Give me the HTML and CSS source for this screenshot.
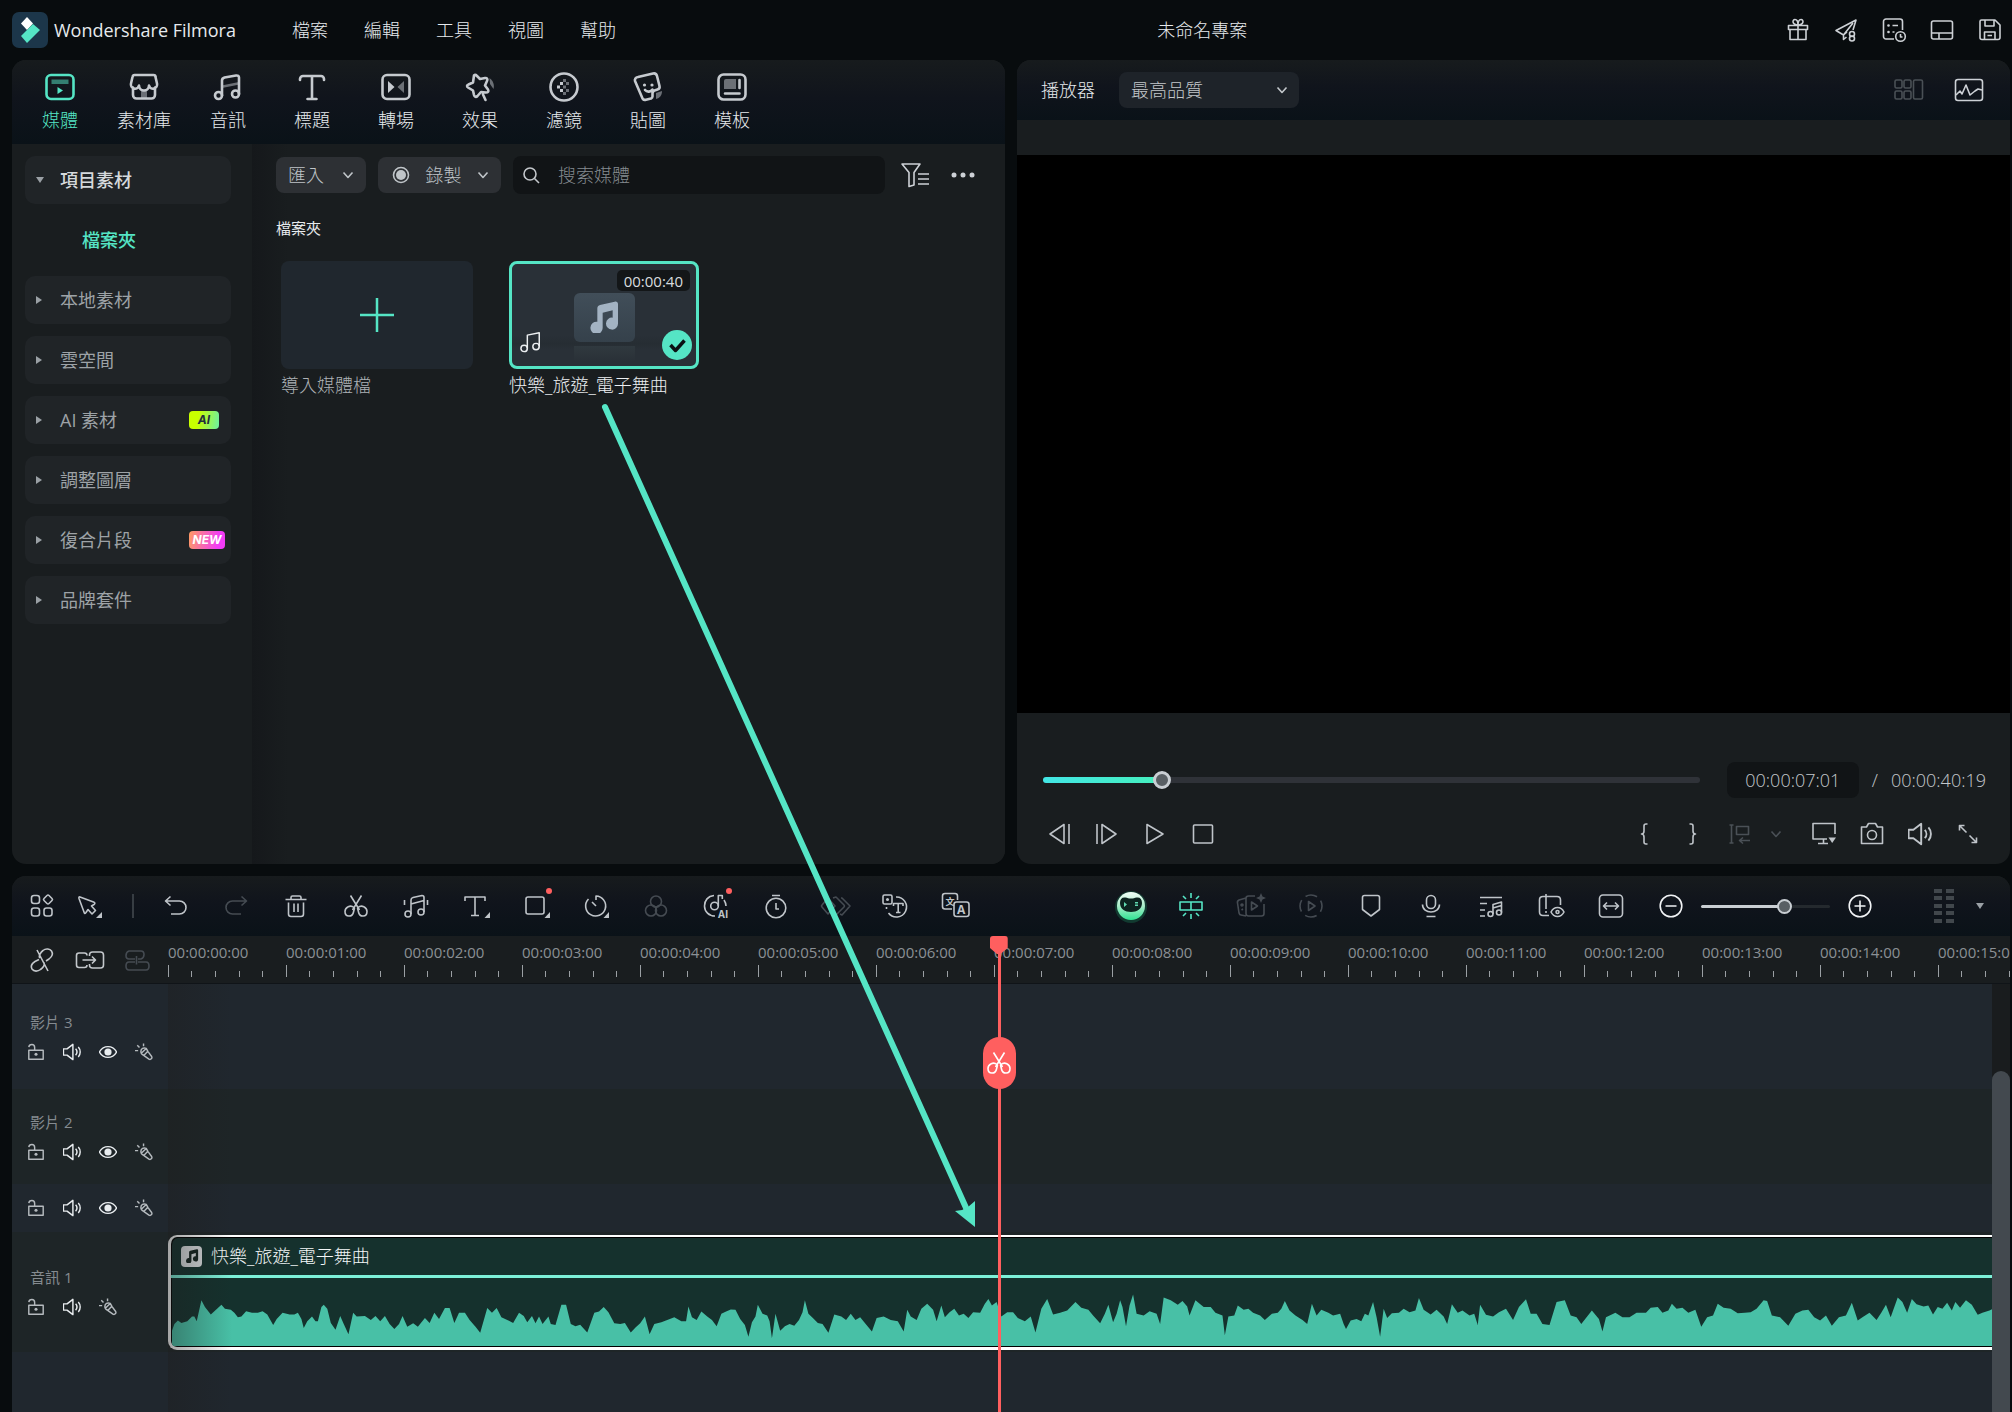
FILE: index.html
```html
<!DOCTYPE html>
<html lang="zh-Hant">
<head>
  <meta charset="UTF-8">
  <meta name="viewport" content="width=device-width, initial-scale=1">
  <title>Wondershare Filmora</title>
  <link rel="stylesheet" href="styles.css">
</head>
<body>

  <!-- Iconos compartidos -->
  <svg class="sprite" aria-hidden="true">
    <symbol id="i-chevron" viewBox="0 0 12 12"><path d="M1.500 3.500 6 8.500l4.500-5"/></symbol>
    <symbol id="i-scissors" viewBox="0 0 24 24"><path d="M6.500 1.500 15.500 16M17.500 1.500 8.500 16"/><path d="M10 13.500C6.500 10.500 1 13 1 17.500c0 6 7.500 6 8.500.500l1-4M14 13.500c3.500-3 9-.500 9 4 0 6-7.500 6-8.500.500l-1-4"/></symbol>
    <symbol id="i-lock" viewBox="0 0 20 20"><path d="M2 8h16v10H2zM2 4.500C2.500 1 8.500.500 8.500 5v3"/><circle class="solid" cx="10" cy="12.500" r="1.700"/></symbol>
    <symbol id="i-speaker" viewBox="0 0 20 20"><path d="M.500 6.500H4.500L11 1.500v17L4.500 13.500H.500zM14 6.500c1.800 2 1.800 5 0 7M17 4.500c2.800 3 2.800 8 0 11"/></symbol>
    <symbol id="i-eye" viewBox="0 0 20 20"><path d="M.500 10C5 2 15 2 19.500 10 15 18 5 18 .500 10z"/><circle class="solid" cx="10" cy="10" r="4"/></symbol>
    <symbol id="i-fx" viewBox="0 0 20 20"><path d="M6.500 9.500c0-3 3-5 6-3.500l2 3.500 4 5.500c1 2-1 4-3 3l-5.500-4c-2-1-3.500-2.500-3.500-4.500zM7 11.500 12.500 6M10 13.500 14.500 9M0 8.500h3.500M2.500 2.500l2.500 2.500M9.500.500v3"/></symbol>
    <symbol id="i-notes" viewBox="0 0 24 24"><circle cx="4.500" cy="19" r="3.500"/><circle cx="17.500" cy="17" r="3.500"/><path d="M8 19V4.500L21 2v15"/></symbol>
    <symbol id="i-notes-solid" viewBox="0 0 24 24"><path class="solid" d="M7 5.500C7 4 8 3.300 9 3l11-2.500c1.500-.300 2.500.500 2.500 2V17a4.500 4.500 0 1 1-4-4.500V7l-7.500 1.800V20A4.600 4.600 0 1 1 7 15.600z"/></symbol>
  </svg>

  <header class="titlebar">
    <svg class="logo" viewBox="0 0 36 36" aria-hidden="true">
      <rect width="36" height="36" rx="7" fill="#1c364a"/>
      <path d="M15 5l6 6.500-6 6.500-6-6.500z" fill="#fff"/>
      <path d="M21 12l7 6-13 13-6-7z" fill="#55e5c5"/>
    </svg>
    <span class="app-name">Wondershare Filmora</span>
    <nav class="menu">
      <button>檔案</button>
      <button>編輯</button>
      <button>工具</button>
      <button>視圖</button>
      <button>幫助</button>
    </nav>
    <span class="project-name">未命名專案</span>
    <div class="title-actions">
      <button aria-label="禮物"><svg class="icon" viewBox="0 0 24 24"><path d="M2.500 7.500h19v4h-19zM4 11.500h16v10H4zM12 7.500v14"/><path d="M12 7C6 7 6 1.500 9 1.500c2 0 3 2.500 3 5.500 0-3 1-5.500 3-5.500 3 0 3 5.500-3 5.500z"/></svg></button>
      <button aria-label="分享"><svg class="icon" viewBox="0 0 24 24"><path d="M13 14 9.500 17v4.500l3-2.500M9.500 17 2 12.500 22 2l-3 10M9.500 17 19 5"/><circle cx="18" cy="16" r="2.500"/><circle cx="18" cy="20.500" r="2.500"/></svg></button>
      <button aria-label="任務"><svg class="icon" viewBox="0 0 24 24"><path d="M12 21H4a2.500 2.500 0 0 1-2.500-2.500v-15A2.500 2.500 0 0 1 4 1h14a2.500 2.500 0 0 1 2.500 2.500V12M10.500 7.500H16M10.500 14h2"/><circle class="solid" cx="6.500" cy="7.500" r="1.300"/><circle class="solid" cx="6.500" cy="14" r="1.300"/><circle cx="18.500" cy="18.500" r="4.800"/><path d="M18.500 16v3h2"/></svg></button>
      <button aria-label="版面"><svg class="icon" viewBox="0 0 24 24"><rect x="1.500" y="3" width="21" height="18" rx="2"/><path d="M1.500 15h21M9 15v6"/></svg></button>
      <button aria-label="儲存"><svg class="icon" viewBox="0 0 24 24"><path d="M3.500 2H17l5 5v12.500a2 2 0 0 1-2 2H4a2 2 0 0 1-2-2v-16A1.500 1.500 0 0 1 3.500 2zM7 2v6h9V2M6.500 21.500V14H17v7.500M9.500 17.500H14"/></svg></button>
    </div>
  </header>

  <main class="workspace">

    <!-- Panel de medios -->
    <section class="panel media">
      <nav class="tabs">
        <button class="tab active">
          <svg class="tab-icon" viewBox="0 0 30 30"><rect x="1.500" y="3" width="27" height="24" rx="4.500"/><path class="solid dim" d="M6.500 7.500h17V12h-17z"/><path class="solid" d="M12.500 15l5.500 3.500-5.500 3.500z"/></svg>
          媒體
        </button>
        <button class="tab">
          <svg class="tab-icon" viewBox="0 0 30 30"><path d="M4 15.500V23a3.500 3.500 0 0 0 3.500 3.500h15A3.500 3.500 0 0 0 26 23v-7.500M5.500 3h19c1 0 2 .500 2 2l1.500 6.500a4 4 0 0 1-8 2 5 5 0 0 1-10 0 4 4 0 0 1-8-2L3.500 5c.300-1.500 1-2 2-2z"/><path class="solid dim" d="M12 26v-5a3 3 0 0 1 6 0v5z"/></svg>
          素材庫
        </button>
        <button class="tab">
          <svg class="tab-icon" viewBox="0 0 30 30"><circle cx="5.500" cy="23.500" r="3.500"/><circle cx="22.500" cy="22" r="3.500"/><path d="M9 23.500V8.500c0-2 1-2.500 2.500-3L23 3.500c2-.300 3 .500 3 2V22"/><path class="soft" d="M10 14.500l15-3"/></svg>
          音訊
        </button>
        <button class="tab">
          <svg class="tab-icon" viewBox="0 0 30 30"><path d="M3 8V7a3 3 0 0 1 3-3h18a3 3 0 0 1 3 3v1M15 4v22.500M10.500 27h9"/></svg>
          標題
        </button>
        <button class="tab">
          <svg class="tab-icon" viewBox="0 0 30 30"><rect x="1.500" y="3" width="27" height="24" rx="4.500"/><path class="solid" d="M7 9l6.500 6L7 21z"/><path class="solid dim" d="M23 9l-6.500 6 6.500 6z"/></svg>
          轉場
        </button>
        <button class="tab">
          <svg class="tab-icon" viewBox="0 0 30 30"><path d="M9 3.500c1-1 2-.500 3 .500l3 3 5-1c2-.300 3 1 2 3l-2 4.500 3 4c1 2 0 3-2 3l-5-.500-3.500 4c-1.500 1.500-3 1-3.500-1L8 18.500l-5-3c-1.500-1-1.200-2.500.500-3l4.500-2zM18 22.500 20.500 28"/><path class="solid dim" d="M24.500 6c4 3 5 7 4 11l-3.500-5z"/></svg>
          效果
        </button>
        <button class="tab">
          <svg class="tab-icon" viewBox="0 0 30 30"><circle cx="15" cy="15" r="13.500"/><path class="solid" d="M8 13.500h3v3H8zM11 10h3v3h-3zM11 17h3v3h-3z"/><path class="solid dim" d="M14 7h3v3h-3zM14 13.500h3v3h-3zM14 20h3v3h-3zM17 10h3v3h-3zM17 17h3v3h-3z"/></svg>
          濾鏡
        </button>
        <button class="tab">
          <svg class="tab-icon" viewBox="0 0 30 30"><path d="M5 5 20 1.500c2.500-.500 3.500.500 4 2.500l2.500 10c.500 2-.500 3-2 3.500l-3 1c-1.500.500-2 1.500-2 3v3c0 1-.500 1.500-1.500 2l-5 1.200c-2 .500-3.500-.500-4-2.500L2 9c-.500-2 .500-3.500 3-4zM12 18c2 2.500 6 2 7.500-.500"/><circle class="solid" cx="11.500" cy="13" r="1.600"/><circle class="solid" cx="19" cy="13" r="1.600"/><path class="solid dim" d="M23 21l6-2c0 4-2 7-6 8z"/></svg>
          貼圖
        </button>
        <button class="tab">
          <svg class="tab-icon" viewBox="0 0 30 30"><rect x="1.500" y="2.500" width="27" height="25" rx="5"/><path class="solid dim" d="M7 9a2 2 0 0 1 2-2h10v10H7z"/><path d="M22.500 8v8M8 21.500h14.500"/></svg>
          模板
        </button>
      </nav>

      <div class="media-body">
        <aside class="sidebar">
          <button class="group open"><span class="caret"></span>項目素材</button>
          <a class="subitem" href="#folder">檔案夾</a>
          <button class="group"><span class="caret"></span>本地素材</button>
          <button class="group"><span class="caret"></span>雲空間</button>
          <button class="group"><span class="caret"></span>AI 素材<span class="tag tag-ai">AI</span></button>
          <button class="group"><span class="caret"></span>調整圖層</button>
          <button class="group"><span class="caret"></span>復合片段<span class="tag tag-new">NEW</span></button>
          <button class="group"><span class="caret"></span>品牌套件</button>
        </aside>

        <div class="browser" id="folder">
          <div class="browser-bar">
            <button class="pill">匯入 <svg class="chevron"><use href="#i-chevron"/></svg></button>
            <button class="pill pill-wide"><svg class="rec" viewBox="0 0 18 18"><circle cx="9" cy="9" r="7.500"/><circle class="solid" cx="9" cy="9" r="5"/></svg> 錄製 <svg class="chevron"><use href="#i-chevron"/></svg></button>
            <label class="search">
              <svg class="search-icon" viewBox="0 0 18 18"><circle cx="8" cy="8" r="6"/><path d="M12.500 12.500 17 17"/></svg>
              <input type="search" placeholder="搜索媒體" aria-label="搜索媒體">
            </label>
            <button class="bar-button" aria-label="篩選"><svg class="filter-icon" viewBox="0 0 30 26"><path d="M2 2h18l-6 8.500V23l-5 1.500v-14zM18 12h11M18 17h11M18 22h11"/></svg></button>
            <button class="bar-button" aria-label="更多"><svg class="icon" viewBox="0 0 24 24"><circle class="solid" cx="3" cy="12" r="2.500"/><circle class="solid" cx="12" cy="12" r="2.500"/><circle class="solid" cx="21" cy="12" r="2.500"/></svg></button>
          </div>

          <h2 class="folder-title">檔案夾</h2>

          <div class="items">
            <figure class="item">
              <button class="thumb thumb-add" aria-label="導入媒體檔"><svg viewBox="0 0 34 34"><path d="M17 0v34M0 17h34"/></svg></button>
              <figcaption>導入媒體檔</figcaption>
            </figure>
            <figure class="item selected">
              <div class="thumb thumb-audio">
                <span class="cover"><svg><use href="#i-notes-solid"/></svg></span>
                <span class="floor"></span>
                <span class="length">00:00:40</span>
                <svg class="kind"><use href="#i-notes"/></svg>
                <svg class="check" viewBox="0 0 30 30"><circle cx="15" cy="15" r="15"/><path d="M8.500 15l5 5.500 9-10"/></svg>
              </div>
              <figcaption>快樂_旅遊_電子舞曲</figcaption>
            </figure>
          </div>
        </div>
      </div>
    </section>

    <!-- Reproductor -->
    <section class="panel player">
      <div class="player-head">
        <label for="quality">播放器</label>
        <div class="select-box">
          <select id="quality">
            <option>最高品質</option>
          </select>
          <svg class="chevron"><use href="#i-chevron"/></svg>
        </div>
        <div class="player-views">
          <button class="disabled" aria-label="多鏡頭"><svg class="wide-icon" viewBox="0 0 30 24"><rect x="1" y="2" width="7" height="8" rx="1.500"/><rect x="10" y="2" width="7" height="8" rx="1.500"/><rect x="1" y="13" width="7" height="8" rx="1.500"/><rect x="10" y="13" width="7" height="8" rx="1.500"/><rect x="19.500" y="2" width="9" height="19" rx="1.500"/></svg></button>
          <button aria-label="示波器"><svg class="wide-icon" viewBox="0 0 30 24"><rect x="1.500" y="1.500" width="27" height="21" rx="2.500"/><path d="M2 17l4-4 2 3 4-9 4 10 5-4 3-2 4 1"/></svg></button>
        </div>
      </div>
      <div class="stage"></div>
      <div class="controls">
        <div class="seek-row">
          <input class="seek" type="range" min="0" max="100" step="0.1" value="17.2" aria-label="播放進度">
          <span class="time current">00:00:07:01</span>
          <span class="slash">/</span>
          <span class="time">00:00:40:19</span>
        </div>
        <div class="button-row">
          <button aria-label="上一幀"><svg class="icon" viewBox="0 0 24 24"><path d="M17 2.500v19L3 12zM22 2v20"/></svg></button>
          <button aria-label="下一幀"><svg class="icon" viewBox="0 0 24 24"><path d="M7 2.500v19L21 12zM2 2v20"/></svg></button>
          <button aria-label="播放"><svg class="icon" viewBox="0 0 24 24"><path d="M4 2.500v19L20 12z"/></svg></button>
          <button aria-label="停止"><svg class="icon" viewBox="0 0 24 24"><rect x="2.500" y="3" width="19" height="18" rx="1"/></svg></button>
          <span class="spacer"></span>
          <button aria-label="標記入點"><svg class="icon" viewBox="0 0 24 24"><path d="M15.500 2H14q-2 0-2 2v5q0 3-2.500 3 2.500 0 2.500 3v5q0 2 2 2h1.500"/></svg></button>
          <button aria-label="標記出點"><svg class="icon" viewBox="0 0 24 24"><path d="M9.500 2H11q2 0 2 2v5q0 3 2.500 3-2.500 0-2.500 3v5q0 2-2 2H9.500"/></svg></button>
          <button class="disabled small after-gap" aria-label="插入"><svg class="icon" viewBox="0 0 24 24"><path d="M1.500 3h4M3.500 3v18M1.500 21h4M8.500 4.500h12v8h-12zM22 18.500H12M15 15.500l-3.500 3 3.500 3"/></svg></button>
          <button class="disabled" aria-label="插入選項"><svg class="chevron"><use href="#i-chevron"/></svg></button>
          <button aria-label="顯示器"><svg class="icon" viewBox="0 0 24 24"><path d="M15 17H1V1.500h22V12M11.500 17v4.500M6 21.500h10"/><path class="solid" d="M16.500 15.500h7.500L20.200 21z"/></svg></button>
          <button aria-label="快照"><svg class="icon" viewBox="0 0 24 24"><path d="M1.500 5h5L8.500 1.500h7l2 3.500h5v16.500h-21z"/><circle cx="12" cy="13" r="4.500"/></svg></button>
          <button aria-label="音量"><svg class="icon"><use href="#i-speaker"/></svg></button>
          <button aria-label="全螢幕"><svg class="icon" viewBox="0 0 24 24"><path d="M3.500 8.500v-5h5M3.500 3.500l7 7M20.500 15.500v5h-5M20.500 20.500l-7-7"/></svg></button>
        </div>
      </div>
    </section>
  </main>

  <!-- Línea de tiempo -->
  <section class="timeline">
    <div class="tools">
      <button class="tool narrow" aria-label="面板"><svg class="icon" viewBox="0 0 24 24"><rect x="1.500" y="1.500" width="8" height="8" rx="2.500"/><rect x="1.500" y="14" width="8" height="8" rx="2.500"/><rect x="14" y="14" width="8" height="8" rx="2.500"/><path d="M17 1.500q1-1 2 0l3 3q1 1 0 2l-3 3q-1 1-2 0l-3-3q-1-1 0-2z"/></svg></button>
      <button class="tool narrow" aria-label="選取"><svg class="icon" viewBox="0 0 24 24"><path d="M2 3 15.500 8q2.500 1 .500 2.500l-2.500 1.500 4 4.500-3.500 3.500-4-4.500-2 3q-1.500 2-2-.500L1 4.500Q.500 2.500 2 3z"/><path class="solid" d="M24 18v6h-6z"/></svg></button>
      <span class="divider"></span>
      <button class="tool" aria-label="復原"><svg class="icon" viewBox="0 0 24 24"><path d="M1.500 7h14a6.500 6.500 0 0 1 0 13H7M6.500 2.500l-5 4.500 5 4.500"/></svg></button>
      <button class="tool disabled" aria-label="重做"><svg class="icon" viewBox="0 0 24 24"><path d="M22.500 7h-14a6.500 6.500 0 0 0 0 13H17M17.500 2.500l5 4.500-5 4.500"/></svg></button>
      <button class="tool" aria-label="刪除"><svg class="icon" viewBox="0 0 24 24"><path d="M1.500 5.500h21M7 5V3.500Q7 2 8.500 2h7Q17 2 17 3.500V5M4.500 8.500V20q0 2.500 2.500 2.500h10q2.500 0 2.500-2.500V8.500M10 9.500V18M14 9.500V18"/></svg></button>
      <button class="tool" aria-label="分割"><svg class="icon"><use href="#i-scissors"/></svg></button>
      <button class="tool" aria-label="音訊編輯"><svg class="icon" viewBox="0 0 24 24"><circle cx="4" cy="20" r="3"/><circle cx="17" cy="18" r="3"/><path d="M7 20V6q0-2 2-2.500L18 1.500q2 0 2 2V18M7 10l13-3.500M.500 6v5M23.500 6v5"/></svg></button>
      <button class="tool" aria-label="文字"><svg class="icon" viewBox="0 0 24 24"><path d="M1 7V3h20v4M11 3v18.500M7 21.500h8"/><path class="solid" d="M26 18v6h-5.500z"/></svg></button>
      <button class="tool dot" aria-label="裁切"><svg class="icon" viewBox="0 0 24 24"><rect x="2" y="3" width="18" height="17" rx="2"/><path class="solid" d="M26 18v6h-5.500z"/></svg></button>
      <button class="tool" aria-label="速度"><svg class="icon" viewBox="0 0 24 24"><path d="M4.500 5a10 10 0 1 0 7.500-3v4M8 8l4 4"/><path class="solid" d="M25 18v6h-5.500z"/></svg></button>
      <button class="tool disabled" aria-label="顏色"><svg class="icon" viewBox="0 0 24 24"><circle cx="12" cy="7.500" r="5.500"/><circle cx="7" cy="16.500" r="5.500"/><circle cx="17" cy="16.500" r="5.500"/></svg></button>
      <button class="tool dot" aria-label="AI 音訊"><svg class="icon" viewBox="0 0 24 24"><path d="M10 1.500C4 2 .500 6.500.500 12S5 22 11 22"/><circle cx="10.500" cy="12" r="3.800"/><path d="M14.300 12V1.500h4V5M20 6q2 3 2 6"/><text class="glyph" x="14" y="24" font-size="10">AI</text></svg></button>
      <button class="tool" aria-label="時長"><svg class="icon" viewBox="0 0 24 24"><circle cx="12" cy="14" r="9.800"/><path d="M8 1.500h8M12 9v6h3"/></svg></button>
      <button class="tool disabled" aria-label="關鍵影格"><svg class="icon" viewBox="0 0 24 24"><path d="M4 4l7 8-7 8-6-7q-1-1 0-2zM9 4l3-1 8 8q1 1 0 2l-8 8-3-1M17 4h1l8 8-8 9-2-1"/></svg></button>
      <button class="tool" aria-label="文字轉語音"><svg class="icon" viewBox="0 0 24 24"><rect x="-1" y="1" width="9" height="9" rx="1.500"/><circle class="solid" cx="3.500" cy="5.500" r="1.500"/><path d="M12 3a10 10 0 1 1-7.500 16M2.500 13v2M9.500 12V9.500H19V12M14.200 9.500V18.500M12 18.500h4.500"/></svg></button>
      <button class="tool" aria-label="翻譯"><svg class="icon" viewBox="0 0 24 24"><path d="M8 15H1q-2.500 0-2.500-2.500V2Q-1.500-.500 1-.500h10q2.500 0 2.500 2.500v4"/><rect x="10" y="8" width="15" height="14.500" rx="2.500"/><text class="glyph" x="1.500" y="11" font-size="9">文</text><text class="glyph" x="13" y="20" font-size="12">A</text></svg></button>

      <span class="spacer"></span>

      <button class="tool" aria-label="AI 助手">
        <svg class="robot" viewBox="0 0 36 36">
          <defs>
            <linearGradient id="robot-skin" x1="0" y1="0" x2="0" y2="1"><stop offset="0" stop-color="#f2fff8"/><stop offset=".5" stop-color="#a9ecc9"/><stop offset="1" stop-color="#2fe292"/></linearGradient>
          </defs>
          <circle cx="18" cy="19" r="16" fill="#1fae74" opacity=".25"/>
          <circle cx="18" cy="18" r="14" fill="url(#robot-skin)"/>
          <path d="M7 15c0-4 2-6 5.500-5.500 2 .400 3 1 5.500 1s3.500-.600 5.500-1C27 9 29 11 29 15c0 6-5 9-11 9S7 21 7 15z" fill="#0c2420"/>
          <path d="M11 14l3 2.500-3 2.500zM22 14h3v1.500h-3zM22 16.500h3V18h-3z" fill="#5fd9b0"/>
        </svg>
      </button>
      <button class="tool accent" aria-label="自動吸附"><svg class="icon" viewBox="0 0 24 24"><path d="M1 8h22v8H1zM12 8v8M12-1v5M12 20v5M4 2l3 3M20 2l-3 3M4 22l3-3M20 22l-3-3"/></svg></button>
      <button class="tool disabled" aria-label="渲染"><svg class="icon" viewBox="0 0 24 24"><path d="M16 2H9.500Q7 2 7 4.500v15Q7 22 9.500 22h13q2.500 0 2.500-2.500V10M7 4 0 6q-2 1-1.500 3L0 19q.500 2 2 2l5 1M12.500 8v8l6-4z"/><path class="solid" d="M22-1l1.500 3.500L27 4l-3.500 1.500L22 9l-1.500-3.500L17 4l3.500-1.500z"/><circle cx="3" cy="11" r="1"/><path d="M2.500 16l1.500-1"/></svg></button>
      <button class="tool disabled" aria-label="預覽渲染"><svg class="icon" viewBox="0 0 24 24"><circle cx="12" cy="12" r="11" stroke-dasharray="12 5.280" stroke-dashoffset="6"/><path d="M9.500 7.500v9L16 12z"/></svg></button>
      <button class="tool" aria-label="標記"><svg class="icon" viewBox="0 0 24 24"><path d="M5.500 1.500h13Q20.500 1.500 20.500 3.500V15.500L12 22 3.500 15.500V3.500Q3.500 1.500 5.500 1.500z"/></svg></button>
      <button class="tool" aria-label="錄音"><svg class="icon" viewBox="0 0 24 24"><rect x="7.500" y="1.500" width="9" height="13" rx="4.500"/><path d="M3.500 10.500c0 10 17 10 17 0M7.500 22.500h9"/></svg></button>
      <button class="tool" aria-label="混音"><svg class="icon" viewBox="0 0 24 24"><path d="M1 3.500h22M1 9.500h7M1 16h5M1 22h5"/><circle cx="11.500" cy="20" r="2.500"/><circle cx="20" cy="18.500" r="2.500"/><path d="M14 20v-9.500L22.500 8v10.500M14 14l8.500-2.500"/></svg></button>
      <button class="tool" aria-label="預覽軌道"><svg class="icon" viewBox="0 0 24 24"><path d="M10 21.500H4Q.500 21.500.500 18V6Q.500 2.500 4 2.500h14q3.500 0 3.500 3.500v5M7 0v15M7 17v2"/><path d="M12 18c3-6 10-6 13 0-3 6-10 6-13 0z"/><circle cx="18.500" cy="18" r="1.500"/></svg></button>
      <button class="tool" aria-label="縮放至適合"><svg class="icon" viewBox="0 0 24 24"><rect x=".500" y="1" width="23" height="22" rx="3.500"/><path d="M4.500 12h15M8 8.500 4.500 12 8 15.500M16 8.500l3.500 3.500-3.500 3.500"/></svg></button>
      <button class="tool bright" aria-label="縮小"><svg class="icon" viewBox="0 0 24 24"><circle cx="12" cy="12" r="10.800"/><path d="M6.500 12h11"/></svg></button>
      <input class="zoom" type="range" min="0" max="100" value="67" aria-label="時間軸縮放">
      <button class="tool bright" aria-label="放大"><svg class="icon" viewBox="0 0 24 24"><circle cx="12" cy="12" r="10.800"/><path d="M6.500 12h11M12 6.500v11"/></svg></button>
      <svg class="meter" viewBox="0 0 20 36"><path d="M0 3h8M12 3h8M0 10h8M12 10h8M0 18h8M12 18h8M0 25h8M12 25h8M0 33h8M12 33h8"/></svg>
      <button class="menu-arrow" aria-label="軌道選項"><span class="caret"></span></button>
    </div>

    <div class="ruler-row">
      <div class="ruler-head">
        <button class="tool narrow" aria-label="連結"><svg class="icon" viewBox="0 0 24 24"><path d="M10 10C8 8 11 4 13 2.500c3-2.500 7-1.500 8.500.500 2 3 0 6-2.500 8l-3 2M9 11.500l-4 2c-3 2-4.500 5-3 7.500 2 3 6 2.500 8.500.500 2-1.500 4.500-4.500 3.500-7M7 2l11 21"/></svg></button>
        <button class="tool narrow" aria-label="自動波紋"><svg class="icon" viewBox="0 0 24 24"><path d="M9 17q0 2.500-2.500 2.500H1Q-1.500 19.500-1.500 17V7.500Q-1.500 5 1 5h5.500Q9 5 9 7.500M11.500 8V7q0-3 3-3h8q3 0 3 3v10q0 3-3 3h-8q-3 0-3-3v-1M4.500 12h13M14 8.500l3.500 3.500-3.500 3.500"/></svg></button>
        <button class="tool narrow disabled" aria-label="磁性"><svg class="icon" viewBox="0 0 24 24"><path d="M9 11H3Q0 11 0 7.500T3 3h12q3 0 3 3.500T15 11h-3M9 14H3q-3 0-3 4t3 4h17q3 0 3-4t-3-4h-8M10.500 8v8.500"/></svg></button>
      </div>
      <div class="ruler" id="ruler"></div>
    </div>

    <div class="tracks-area">
      <div class="tracks">
        <div class="track track-video tall">
          <div class="track-head">
            <span class="track-name">影片 3</span>
            <div class="track-buttons">
              <button aria-label="鎖定"><svg><use href="#i-lock"/></svg></button>
              <button class="on" aria-label="靜音"><svg><use href="#i-speaker"/></svg></button>
              <button class="on" aria-label="顯示"><svg><use href="#i-eye"/></svg></button>
              <button aria-label="特效"><svg><use href="#i-fx"/></svg></button>
            </div>
          </div>
          <div class="lane"></div>
        </div>
        <div class="track track-alt">
          <div class="track-head">
            <span class="track-name">影片 2</span>
            <div class="track-buttons">
              <button aria-label="鎖定"><svg><use href="#i-lock"/></svg></button>
              <button class="on" aria-label="靜音"><svg><use href="#i-speaker"/></svg></button>
              <button class="on" aria-label="顯示"><svg><use href="#i-eye"/></svg></button>
              <button aria-label="特效"><svg><use href="#i-fx"/></svg></button>
            </div>
          </div>
          <div class="lane"></div>
        </div>
        <div class="track track-video compact">
          <div class="track-head">
            <div class="track-buttons">
              <button aria-label="鎖定"><svg><use href="#i-lock"/></svg></button>
              <button class="on" aria-label="靜音"><svg><use href="#i-speaker"/></svg></button>
              <button class="on" aria-label="顯示"><svg><use href="#i-eye"/></svg></button>
              <button aria-label="特效"><svg><use href="#i-fx"/></svg></button>
            </div>
          </div>
          <div class="lane"></div>
        </div>
        <div class="track track-alt audio">
          <div class="track-head">
            <span class="track-name">音訊 1</span>
            <div class="track-buttons">
              <button aria-label="鎖定"><svg><use href="#i-lock"/></svg></button>
              <button class="on" aria-label="靜音"><svg><use href="#i-speaker"/></svg></button>
              <button aria-label="特效"><svg><use href="#i-fx"/></svg></button>
            </div>
          </div>
          <div class="lane">
            <div class="clip">
              <div class="clip-name"><span class="clip-icon"><svg><use href="#i-notes-solid"/></svg></span>快樂_旅遊_電子舞曲</div>
              <svg class="wave" viewBox="3 0 1548 195" preserveAspectRatio="none">
                <path d="M3 195V150L5 130 8 120 11 127 16 122 20 108 22 108 24 122 28 60 31 80 36 102 45 73 48 85 53 88 56 97 59 110 62 108 66 92 71 97 76 97 80 92 84 102 89 133 92 115 97 97 103 102 107 102 110 97 113 115 115 142 118 122 122 108 125 122 127 122 130 80 132 73 135 85 138 127 142 147 146 106 149 130 153 160 157 97 160 108 167 106 172 118 176 106 180 122 184 106 188 130 192 145 196 130 199 106 203 138 208 128 212 138 218 112 222 127 226 97 230 115 235 83 239 83 243 127 247 97 252 97 256 118 261 138 265 156 271 83 275 97 279 83 283 110 288 118 293 127 298 97 302 106 305 125 309 106 312 128 315 108 318 130 323 108 325 130 329 133 334 73 338 73 342 130 346 137 350 132 356 155 362 97 366 93 370 80 374 95 379 128 384 130 388 127 393 155 397 140 401 128 405 108 409 160 413 130 419 125 424 118 430 110 436 122 440 122 442 78 445 110 449 118 453 93 458 108 462 118 466 137 470 100 474 93 478 87 482 88 486 115 490 133 493 168 496 125 499 108 501 73 505 100 509 105 511 122 513 172 516 100 520 150 524 137 528 130 532 135 536 118 539 95 541 60 544 100 548 113 552 127 556 130 561 156 566 102 572 108 576 118 580 100 584 118 588 110 592 127 598 152 602 112 608 108 614 118 620 122 625 152 628 88 631 108 636 118 640 85 645 70 650 88 653 122 657 75 660 110 664 95 668 85 672 105 676 100 680 112 684 95 690 97 694 70 697 56 700 75 704 65 708 108 713 95 718 95 722 112 728 122 733 108 737 155 742 85 747 56 752 102 758 97 764 90 771 65 776 82 782 88 786 105 792 128 796 100 799 73 803 125 806 100 809 60 811 80 814 137 817 75 820 43 823 100 829 105 834 92 840 100 843 130 846 52 852 60 858 73 862 62 866 78 868 105 873 60 880 80 886 80 890 97 896 105 898 163 901 108 906 105 909 75 914 88 918 85 922 97 928 105 932 118 938 100 943 97 946 85 949 62 953 90 958 105 964 118 968 130 972 70 976 105 980 88 986 97 990 105 996 100 999 130 1001 145 1005 120 1010 115 1014 122 1017 100 1020 105 1024 65 1027 110 1030 168 1033 85 1036 112 1040 98 1046 97 1050 85 1055 95 1060 90 1063 53 1067 88 1073 102 1078 88 1084 108 1087 130 1091 72 1096 97 1100 90 1106 105 1110 100 1113 133 1115 73 1120 103 1126 108 1131 95 1137 85 1143 118 1148 80 1154 57 1158 100 1163 100 1168 130 1174 133 1180 65 1187 60 1192 105 1197 110 1201 130 1206 108 1210 90 1216 115 1219 152 1222 110 1230 97 1236 110 1242 110 1248 97 1256 97 1260 82 1266 80 1270 97 1275 90 1278 70 1282 85 1287 82 1292 97 1298 88 1303 138 1308 110 1313 105 1317 70 1322 82 1328 85 1334 98 1340 97 1345 95 1350 85 1356 60 1359 62 1363 105 1370 110 1377 135 1383 100 1389 90 1394 88 1399 110 1404 120 1409 105 1414 135 1420 110 1426 105 1431 67 1436 120 1440 110 1446 97 1452 118 1456 97 1460 73 1464 110 1470 52 1474 65 1478 97 1482 56 1486 72 1492 78 1496 75 1500 102 1504 80 1508 85 1512 67 1516 90 1519 65 1523 82 1528 60 1533 73 1538 103 1542 97 1548 90 1551 85V195z"/>
              </svg>
            </div>
          </div>
        </div>
        <div class="track track-video rest">
          <div class="track-head"></div>
          <div class="lane"></div>
        </div>
      </div>
      <div class="scrollbar"><span class="scroll-thumb"></span></div>
    </div>

    <div class="playhead">
      <span class="playhead-top"></span>
      <button class="playhead-cut" aria-label="在此分割"><svg><use href="#i-scissors"/></svg></button>
    </div>
  </section>

  <svg class="drag-arrow" viewBox="0 0 380 830" aria-hidden="true">
    <path class="line" d="M5 5 367 808"/>
    <path class="head" d="M375 825V799l-7 6-6 3-7 1z"/>
  </svg>

  <script src="script.js"></script>
</body>
</html>
```
FILE: styles.css
```css
* {
  box-sizing: border-box;
}

body {
  margin: 0;
  height: 100vh;
  padding: 0 2px 0 12px;
  display: grid;
  grid-template-rows: 60px minmax(0, 102fr) minmax(0, 67fr);
  overflow: hidden;
  position: relative;
  background: #080c0e;
  color: #e6eaed;
  font-family: "Open Sans", "Noto Sans CJK TC", sans-serif;
  font-size: 18px;
  font-weight: 300;
  line-height: 24px;
}

button, input, select {
  font: inherit;
  color: inherit;
}

button {
  display: flex;
  align-items: center;
  justify-content: center;
  padding: 0;
  border: 0;
  background: none;
  white-space: nowrap;
  cursor: pointer;
}

svg {
  display: block;
  flex: none;
  overflow: visible;
  fill: none;
  stroke: currentColor;
  stroke-width: 1.6;
  stroke-linejoin: round;
}

.solid {
  fill: currentColor;
  stroke: none;
}

.dim {
  opacity: 0.5;
}

.soft {
  opacity: 0.5;
}

.glyph {
  fill: currentColor;
  stroke: none;
  font-weight: 700;
}

.sprite {
  position: absolute;
  width: 0;
  height: 0;
}

.icon {
  width: 24px;
  height: 24px;
}

.chevron {
  width: 12px;
  height: 12px;
}

.spacer {
  flex: 1;
}

.caret {
  width: 0;
  height: 0;
  border: 4px solid transparent;
  border-left: 6px solid #9aa0a5;
  border-right: 0;
}

.disabled {
  color: #4a5056;
}

/* Barra de título */
.titlebar {
  display: grid;
  grid-template-columns: 36px 226px 22fr auto 19fr;
  align-items: center;
}

.logo {
  width: 36px;
  height: 36px;
  stroke: none;
}

.app-name {
  padding-left: 6px;
  font-weight: 400;
}

.menu {
  display: flex;
}

.menu button {
  width: 72px;
}

.title-actions {
  display: flex;
  justify-content: flex-end;
  gap: 8px;
  color: #cdd1d5;
}

.title-actions button {
  width: 40px;
}

/* Paneles */
.workspace {
  display: grid;
  grid-template-columns: minmax(0, 1fr) minmax(0, 1fr);
  gap: 12px;
  padding-bottom: 12px;
}

.panel {
  display: flex;
  flex-direction: column;
  min-height: 0;
  border-radius: 14px;
  overflow: hidden;
  background: #191d1f;
}

.tabs,
.player-head,
.tools {
  background: linear-gradient(#171b1d, #10141c 45%, #0a1218);
}

.tabs {
  display: flex;
  height: 84px;
  padding: 12px 6px;
}

.tab {
  width: 84px;
  flex-direction: column;
  justify-content: flex-start;
  gap: 6px;
}

.tab-icon {
  width: 30px;
  height: 30px;
  color: #c6cacf;
  stroke-width: 2.6;
  stroke-linecap: round;
}

.tab.active,
.tab.active .tab-icon {
  color: #55e5c5;
}

.media-body {
  flex: 1;
  display: flex;
  min-height: 0;
}

.sidebar {
  width: 240px;
  padding: 12px 21px 12px 13px;
  display: flex;
  flex-direction: column;
  gap: 12px;
}

.group {
  height: 48px;
  padding: 0 6px 0 11px;
  justify-content: flex-start;
  border-radius: 10px;
  background: #202427;
  color: #9da2a6;
  font-weight: 400;
}

.group .caret {
  margin-right: 18px;
}

.group.open {
  color: #d5d9dc;
  font-weight: 500;
}

.group.open .caret {
  margin-right: 16px;
  border: 4px solid transparent;
  border-top: 6px solid #9aa0a5;
  border-bottom: 0;
}

.subitem {
  height: 48px;
  padding-left: 57px;
  line-height: 48px;
  color: #55e5c5;
  font-weight: 500;
  text-decoration: none;
}

.tag {
  width: 36px;
  height: 18px;
  margin-left: auto;
  border-radius: 4px;
  font-family: Inter, sans-serif;
  font-size: 12px;
  font-style: italic;
  font-weight: 700;
  line-height: 18px;
}

.tag-ai {
  width: 30px;
  margin-right: 6px;
  background: linear-gradient(100deg, #c8ff00 30%, #6ceea5);
  color: #23303a;
}

.tag-new {
  background: linear-gradient(100deg, #ff9b63, #f23cf6 80%);
  color: #fff;
}

.browser {
  flex: 1;
  min-width: 0;
  padding: 12px 24px;
  background: linear-gradient(to right, #15181b, #191d1f 36px);
}

.browser-bar {
  display: flex;
  align-items: center;
  gap: 12px;
}

.pill {
  width: 90px;
  height: 36px;
  padding: 0 12px;
  justify-content: space-between;
  border-radius: 8px;
  background: #2d3034;
  color: #bfc4c8;
}

.pill-wide {
  width: 123px;
  padding-left: 14px;
}

.rec {
  width: 18px;
  height: 18px;
}

.search {
  flex: 1;
  height: 38px;
  display: flex;
  align-items: center;
  gap: 18px;
  padding: 0 9px;
  border-radius: 8px;
  background: #111416;
  color: #c3c7cb;
}

.search-icon {
  width: 18px;
  height: 18px;
}

.search input {
  flex: 1;
  min-width: 0;
  padding: 0;
  border: 0;
  outline: 0;
  background: none;
}

.search input::placeholder {
  color: #858b90;
}

.bar-button {
  width: 36px;
  height: 36px;
  color: #cdd1d6;
}

.filter-icon {
  width: 30px;
  height: 26px;
}

.folder-title {
  margin: 22px 0 21px;
  font-size: 15px;
  font-weight: 400;
  line-height: 24px;
}

.items {
  display: flex;
  gap: 36px;
  padding-left: 5px;
}

.item {
  margin: 0;
  width: 192px;
  color: #adb2b6;
}

.item.selected {
  width: 190px;
  color: #eceff1;
}

.item figcaption {
  margin-top: 4px;
}

.thumb {
  position: relative;
  display: flex;
  align-items: center;
  justify-content: center;
  width: 100%;
  height: 108px;
  border-radius: 8px;
  background: #20272e;
}

.thumb-add svg {
  width: 34px;
  height: 34px;
  color: #55e5c5;
  stroke-width: 2.5;
}

.thumb-audio {
  border: 3px solid #55e5c5;
  background: linear-gradient(#293037 70%, #262d33 78%, #293037 84%);
}

.cover {
  display: grid;
  place-items: center;
  width: 61px;
  height: 49px;
  margin-top: 4px;
  border-radius: 6px;
  background: linear-gradient(#414e59, #35414b);
  color: #a3b3c3;
}

.cover svg {
  width: 32px;
  height: 32px;
}

/* Reflejo bajo la portada */
.floor {
  position: absolute;
  bottom: 4px;
  left: 62px;
  width: 61px;
  height: 16px;
  background: linear-gradient(#30393f, transparent);
}

.length {
  position: absolute;
  top: 6px;
  right: 6px;
  height: 21px;
  padding: 0 7px;
  border-radius: 5px;
  background: #131618;
  color: #d8dcdf;
  font-size: 15px;
  font-weight: 400;
  line-height: 22px;
}

.kind {
  position: absolute;
  left: 8px;
  bottom: 13px;
  width: 22px;
  height: 22px;
}

.check {
  position: absolute;
  right: 4px;
  bottom: 6px;
  width: 30px;
  height: 30px;
  stroke: none;
}

.check circle {
  fill: #55e5c5;
}

.check path {
  stroke: #0b1113;
  stroke-width: 3.5;
}

/* Reproductor */
.player-head {
  display: flex;
  align-items: center;
  gap: 24px;
  height: 60px;
  padding: 0 26px 0 24px;
}

.select-box {
  display: flex;
  align-items: center;
  width: 180px;
  height: 36px;
  padding-right: 11px;
  border-radius: 8px;
  background: #1e2329;
  color: #c3c7cb;
}

.select-box select {
  flex: 1;
  height: 36px;
  padding: 0 12px;
  border: 0;
  outline: 0;
  background: none;
  appearance: none;
}

.player-views {
  display: flex;
  gap: 30px;
  margin-left: auto;
  color: #cdd1d6;
}

.wide-icon {
  width: 30px;
  height: 24px;
}

.stage {
  flex: 1;
  margin-top: 35px;
  background: #000;
}

.controls {
  padding-top: 49px;
}

.seek-row {
  display: flex;
  align-items: center;
  padding: 0 24px 0 26px;
  color: #c3c8cc;
}

input[type="range"] {
  margin: 0;
  appearance: none;
  background: none;
}

.seek {
  flex: 1;
  height: 18px;
}

.seek::-webkit-slider-runnable-track {
  height: 6px;
  border-radius: 3px;
  background: linear-gradient(to right, #43e6e6, #45f0bd 18%, #2f3238 18%);
}

.seek::-webkit-slider-thumb {
  appearance: none;
  width: 18px;
  height: 18px;
  margin-top: -6px;
  border: 3px solid #c9ced3;
  border-radius: 50%;
  background: #595f64;
}

.current {
  width: 132px;
  height: 36px;
  margin-left: 27px;
  border-radius: 8px;
  background: #111416;
  line-height: 36px;
  text-align: center;
}

.slash {
  padding: 0 13px;
}

.button-row {
  display: flex;
  height: 36px;
  margin: 18px 18px 12px 18px;
  color: #bfc4c9;
}

.button-row button {
  width: 48px;
}

.button-row .disabled {
  color: #4a5056;
}

.button-row .small {
  width: 24px;
}

.button-row .after-gap {
  margin-left: 12px;
}

/* Línea de tiempo */
.timeline {
  position: relative;
  display: flex;
  flex-direction: column;
  min-height: 0;
  border-radius: 14px 14px 0 0;
  overflow: hidden;
  background: #191d1f;
}

.tools {
  display: flex;
  align-items: center;
  height: 60px;
  flex: none;
  padding: 0 12px 0 6px;
  color: #bfc4c9;
}

.tool {
  position: relative;
  width: 60px;
  height: 48px;
}

.narrow {
  width: 48px;
}

.tool.accent {
  color: #55e5c5;
}

.tool.bright {
  color: #f0f2f4;
}

.tool.disabled {
  color: #454b52;
}

.tool.dot::after {
  content: "";
  position: absolute;
  top: 6px;
  right: 14px;
  width: 6px;
  height: 6px;
  border-radius: 50%;
  background: #ff5f5f;
}

.divider {
  width: 2px;
  height: 24px;
  margin: 0 12px 0 18px;
  background: #373d43;
}

.robot {
  width: 36px;
  height: 36px;
  stroke: none;
}

.zoom {
  width: 129px;
  height: 14px;
}

.zoom::-webkit-slider-runnable-track {
  height: 3px;
  border-radius: 2px;
  background: linear-gradient(to right, #c9ced3 65%, #24292e 65%);
}

.zoom::-webkit-slider-thumb {
  appearance: none;
  width: 15px;
  height: 15px;
  margin-top: -6px;
  border: 2px solid #c9ced3;
  border-radius: 50%;
  background: #595f64;
}

.meter {
  width: 20px;
  height: 36px;
  margin: 0 8px 0 44px;
  color: #41474c;
  stroke-width: 4;
}

.menu-arrow {
  width: 36px;
  height: 36px;
}

.menu-arrow .caret {
  border: 4px solid transparent;
  border-top: 6px solid #9aa0a5;
  border-bottom: 0;
}

.ruler-row {
  display: flex;
  flex: none;
  height: 48px;
  border-bottom: 1px solid #101418;
}

.ruler-head {
  display: flex;
  width: 156px;
  flex: none;
  padding-left: 6px;
  color: #c3c7cb;
}

.ruler {
  display: flex;
  flex: 1;
  min-width: 0;
  overflow: hidden;
}

/* Un segundo = 118px, cinco marcas por segundo */
.second {
  flex: none;
  width: 118px;
  padding-top: 4px;
  color: #8b9095;
  font-size: 15px;
  font-weight: 400;
  background-image:
    linear-gradient(#9ba0a4, #9ba0a4),
    linear-gradient(#9ba0a4, #9ba0a4),
    linear-gradient(#9ba0a4, #9ba0a4),
    linear-gradient(#9ba0a4, #9ba0a4),
    linear-gradient(#9ba0a4, #9ba0a4);
  background-position: 0 29px, 23px 35px, 47px 35px, 71px 35px, 94px 35px;
  background-size: 1px 12px, 1px 6px, 1px 6px, 1px 6px, 1px 6px;
  background-repeat: no-repeat;
}

.tracks-area {
  flex: 1;
  display: flex;
  min-height: 0;
}

.tracks {
  flex: 1;
  min-width: 0;
  display: flex;
  flex-direction: column;
}

.track {
  display: flex;
  flex: none;
  height: 95px;
}

.track-video {
  background: #20272e;
}

.track-alt {
  background: #1e2527;
}

.tall {
  height: 105px;
}

.compact {
  height: 48px;
}

.audio {
  height: 120px;
}

.rest {
  flex: 1;
}

.track-head {
  width: 156px;
  flex: none;
  display: flex;
  flex-direction: column;
  justify-content: center;
  padding: 6px 0 0 6px;
}

.compact .track-head {
  padding-top: 0;
}

.track-name {
  padding-left: 12px;
  color: #858b90;
  font-size: 15px;
  font-weight: 400;
}

.track-buttons {
  display: flex;
  color: #b5babe;
}

.track-buttons button {
  width: 36px;
  height: 36px;
}

.track-buttons .on {
  color: #e9edf0;
}

.track-buttons svg {
  width: 18px;
  height: 18px;
}

.lane {
  position: relative;
  flex: 1;
  min-width: 0;
  padding: 3px 0 2px;
}

/* Sombra junto a las cabeceras */
.lane::after {
  content: "";
  position: absolute;
  inset: 0 auto 0 0;
  width: 64px;
  background: linear-gradient(to right, rgba(30, 30, 30, 0.4), transparent);
}

.clip {
  height: 100%;
  display: flex;
  flex-direction: column;
  border: solid #fff;
  border-width: 2px 0 3px 3px;
  border-radius: 9px 0 0 9px;
  overflow: hidden;
  background: #15312d;
  box-shadow: inset 1px 1px #000, inset 0 -1px #000;
}

.clip-name {
  display: flex;
  align-items: center;
  gap: 9px;
  height: 41px;
  padding-left: 10px;
  border-bottom: 3px solid #7df0d8;
  color: #f4f7f8;
}

.clip-icon {
  display: grid;
  place-items: center;
  width: 21px;
  height: 21px;
  border-radius: 4px;
  background: #d9dcde;
  color: #15231f;
}

.clip-icon svg {
  width: 14px;
  height: 14px;
}

.wave {
  width: 100%;
  flex: 1;
  min-height: 0;
  margin: 2px 0 1px 1px;
  stroke: none;
  fill: #48c0a6;
}

.scrollbar {
  width: 18px;
  display: flex;
  padding-top: 87px;
  background: #191c1e;
}

.scroll-thumb {
  flex: 1;
  border-radius: 9px 9px 0 0;
  background: #43494f;
}

.playhead {
  position: absolute;
  top: 60px;
  bottom: 0;
  left: calc(156px + 118px * 7.04);
  width: 3px;
  margin-left: -1px;
  background: #ff5f5f;
}

.playhead-top {
  position: absolute;
  top: 0;
  left: -8px;
  width: 18px;
  height: 18px;
  border-radius: 3px 3px 0 0;
  background: #ff5f5f;
  clip-path: polygon(0 0, 100% 0, 100% 65%, 60% 100%, 40% 100%, 0 65%);
}

.playhead-cut {
  position: absolute;
  top: 101px;
  left: -15px;
  width: 33px;
  height: 52px;
  border-radius: 17px;
  background: #ff5f5f;
  color: #fff;
}

.playhead-cut svg {
  width: 24px;
  height: 24px;
}

/* Flecha de arrastre desde el medio hasta la pista */
.drag-arrow {
  position: absolute;
  top: 402px;
  left: 600px;
  width: 380px;
  height: 830px;
  pointer-events: none;
}

.drag-arrow .line {
  stroke: #55e5c5;
  stroke-width: 6;
  stroke-linecap: round;
}

.drag-arrow .head {
  fill: #55e5c5;
  stroke: none;
}
```
FILE: script.js
```js
// Dibuja las etiquetas de la regla, una por segundo
const ruler = document.getElementById('ruler');
const segundos = 16;

for (let i = 0; i < segundos; i++) {
  const marca = document.createElement('span');
  marca.className = 'second';
  marca.textContent = '00:00:' + String(i).padStart(2, '0') + ':00';
  ruler.appendChild(marca);
}
```
